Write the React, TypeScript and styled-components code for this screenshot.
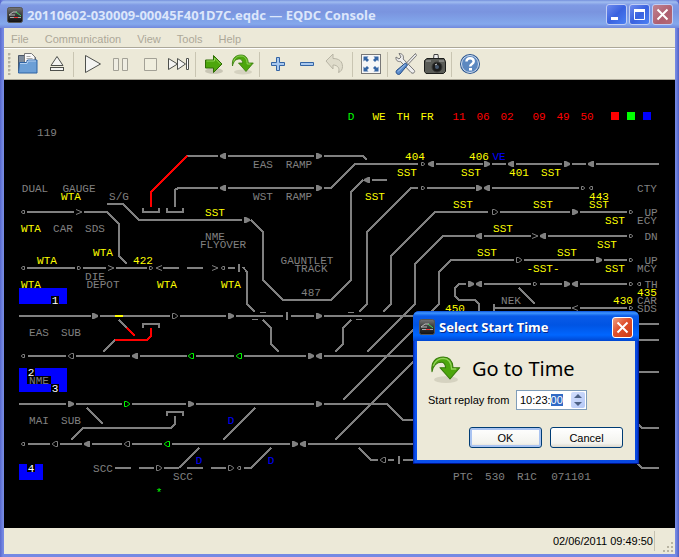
import React, { useEffect, useRef } from 'react';
import styled, { createGlobalStyle } from 'styled-components';

const GlobalStyle = createGlobalStyle`
  * { box-sizing: border-box; }
  body { margin: 0; background: #5668cf; font: 11px/14px "Liberation Sans", sans-serif; color: #000; }
  button, input { font: inherit; }
`;

const Shell = styled.div`
  display: flex;
  flex-direction: column;
  min-height: 100vh;
  padding: 0 4px 3px;
  background: linear-gradient(90deg, #5868cd 0, #7589e3 3px, #7589e3 calc(100% - 3px), #5060c4 100%);
`;

const TitleBar = styled.header`
  display: flex;
  align-items: center;
  gap: 4px;
  height: 28px;
  margin: 0 -4px;
  padding: 1px 6px 0 7px;
  border-radius: 6px 6px 0 0;
  background: linear-gradient(#7590dc 0, #a0bcf0 2px, #7f9ae4 5px, #7a94df 12px, #80a2e8 20px, #84a8ec 24px, #7188dc 28px);
`;

const WindowTitle = styled.h1`
  flex: 1;
  margin: 0;
  color: #dce6fb;
  font: bold 13px/18px "Noto Sans", sans-serif;
  white-space: nowrap;
`;

const CaptionButtons = styled.div`
  display: flex;
  gap: 2px;
`;

const CaptionButton = styled.button<{ $tone: 'blue' | 'faded' | 'red' }>`
  display: grid;
  place-items: center;
  width: 21px;
  height: 21px;
  padding: 0;
  border: 1px solid ${p => (p.$tone === 'red' ? '#fff' : '#c0cdf5')};
  border-radius: 3px;
  background: ${p =>
    p.$tone === 'blue'
      ? 'linear-gradient(135deg, #6f8cee, #3a62df 50%, #4a80f4)'
      : p.$tone === 'faded'
        ? 'linear-gradient(135deg, #c08391, #ae5f70 60%, #b56a76)'
        : 'linear-gradient(135deg, #f0a080, #df4f2c 45%, #cc3a12)'};
`;

const MenuBar = styled.nav`
  display: flex;
  gap: 16px;
  height: 20px;
  padding: 3px 7px 0;
  background: #ece9d8;
  border-bottom: 1px solid #aca899;
`;

const MenuItem = styled.button`
  padding: 0;
  border: 0;
  background: none;
  color: #aca899;
  line-height: 14px;
`;

const ToolBar = styled.div`
  display: flex;
  align-items: center;
  height: 32px;
  padding-left: 4px;
  background: #ece9d8;
  border-top: 1px solid #fff;
  border-bottom: 1px solid #aca899;
`;

const Handle = styled.div`
  width: 5px;
  height: 22px;
  background: radial-gradient(circle at 1px 1px, #b5b19f 1px, transparent 2px) 0 0 / 5px 4px;
`;

const ToolButton = styled.button`
  display: grid;
  place-items: center;
  width: 29px;
  height: 28px;
  padding: 0;
  border: 0;
  background: none;
`;

const Divider = styled.div`
  width: 6px;
  height: 25px;
  border-left: 2px solid transparent;
  background: linear-gradient(90deg, #c9c5b2 1px, transparent 1px) no-repeat;
`;

const Console = styled.main`
  position: relative;
  flex: 1;
  background: #000;
`;

const Board = styled.svg`
  display: block;
  width: 100%;
  height: auto;
  font-family: "Liberation Mono", monospace;
  font-size: 11px;
`;

const StatusBar = styled.footer`
  display: flex;
  align-items: center;
  justify-content: flex-end;
  gap: 8px;
  height: 26px;
  padding-right: 1px;
  background: #ece9d8;
`;

const Clock = styled.output`
  height: 20px;
  padding-right: 1px;
  border-right: 1px solid #c5c2b2;
  line-height: 20px;
`;

const Grip = styled.svg`
  align-self: flex-end;
`;

const Dialog = styled.section`
  position: absolute;
  left: 409px;
  top: 231px;
  width: 226px;
  padding: 0 4px 3px;
  border-radius: 6px 6px 0 0;
  background: linear-gradient(90deg, #001ea0 0, #0a50ee 2px, #0848e0 calc(100% - 2px), #00138c 100%);
  border-bottom: 1px solid #00138c;
`;

const DialogTitle = styled.header`
  display: flex;
  align-items: center;
  gap: 4px;
  height: 30px;
  margin: 0 -4px;
  padding: 2px 6px 0 6px;
  border-radius: 6px 6px 0 0;
  background: linear-gradient(#0a4fd8 0, #3d95ff 2px, #0a5be8 5px, #0054e3 14px, #0066ff 24px, #0046d0 30px);
`;

const DialogName = styled.h2`
  flex: 1;
  margin: 0;
  color: #fff;
  font: bold 13px/18px "Noto Sans", sans-serif;
  text-shadow: 1px 1px #0a2a88;
  white-space: nowrap;
`;

const DialogBody = styled.form`
  padding: 12px 12px 12px 11px;
  background: #ece9d8;
`;

const Heading = styled.div`
  display: flex;
  align-items: center;
  gap: 10px;
  height: 32px;
  padding-left: 2px;
`;

const HeadingText = styled.h3`
  margin: 0;
  font: 20px/28px "Noto Sans", sans-serif;
`;

const Field = styled.div`
  display: grid;
  grid-template-columns: 82px 71px;
  align-items: center;
  gap: 6px;
  margin-top: 5px;
`;

const SpinBox = styled.div`
  display: flex;
  align-items: center;
  height: 20px;
  padding-right: 1px;
  border: 1px solid #7f9db9;
  background: #fff;
`;

const TimeInput = styled.input`
  flex: 1;
  min-width: 0;
  height: 16px;
  padding: 0 0 0 3px;
  border: 0;
  outline: 0;
  background: none;
  &::selection { background: #316ac5; color: #fff; }
`;

const Steppers = styled.div`
  display: flex;
  flex-direction: column;
  width: 14px;
  border-radius: 2px;
  overflow: hidden;
  background: linear-gradient(135deg, #d2defc, #b4c8f6);
`;

const Stepper = styled.button`
  display: grid;
  place-items: center;
  height: 8px;
  padding: 0;
  border: 0;
  background: none;
`;

const Actions = styled.div`
  display: flex;
  justify-content: flex-end;
  gap: 8px;
  margin-top: 17px;
`;

const PushButton = styled.button<{ $primary?: boolean }>`
  width: 73px;
  height: 21px;
  padding: 0;
  border: 1px solid #003c74;
  border-radius: 3px;
  background: linear-gradient(#fff, #f3f3ee 80%, #dcd8cc);
  box-shadow: ${p => (p.$primary ? 'inset 0 0 0 2px #a9c3f1' : 'none')};
  line-height: 18px;
`;

/* ---------- icons ---------- */

const AppIcon = () => (
  <svg width="16" height="16" viewBox="0 0 16 16">
    <defs>
      <linearGradient id="app" x2="0" y2="1"><stop stopColor="#777" /><stop offset=".55" stopColor="#333" /><stop offset="1" stopColor="#111" /></linearGradient>
    </defs>
    <rect x=".5" y=".5" width="15" height="15" rx="2" fill="url(#app)" stroke="#555" />
    <path d="M2 8l4-3h4M2 8h6" fill="none" stroke="#bbb" />
    <path d="M9 5l5 4" stroke="#4d6" />
    <path d="M3 10.500h4M11 10.500h3" stroke="#aaa" />
    <path d="M7 10.500h4" stroke="#e33" />
  </svg>
);

const CloseGlyph = () => (
  <svg width="13" height="13" viewBox="0 0 13 13"><path d="M1.500 1.500l10 10M11.500 1.500l-10 10" stroke="#fff" strokeWidth="2" /></svg>
);
const MinGlyph = () => (
  <svg width="13" height="13" viewBox="0 0 13 13"><path d="M1 10.500h7" stroke="#fff" strokeWidth="3" /></svg>
);
const MaxGlyph = () => (
  <svg width="13" height="13" viewBox="0 0 13 13"><path d="M1.500 2v9.500h10V2" fill="none" stroke="#fff" /><path d="M1 2.500h11" stroke="#fff" strokeWidth="3" /></svg>
);

const Glyph = ({ children }: { children: React.ReactNode }) => (
  <svg width="24" height="24" viewBox="0 0 24 24">{children}</svg>
);

const FolderIcon = () => (
  <Glyph>
    <path d="M2.500 19V3.500h6l1 2h10V19z" fill="#7d8b9c" stroke="#4a5668" />
    <path d="M8.500 12V1.500h7l3.500 3.500v8z" fill="#fafafa" stroke="#777" />
    <path d="M10.500 4.500h4M10.500 6.500h6M10.500 8.500h6" stroke="#aaa" />
    <path d="M3.500 10.500h7l1-2.500h9.500v13H2.500z" fill="#6c9fd6" stroke="#2d62a3" />
    <path d="M4 11.500h7l1-2.500h8" stroke="#b3d0f0" fill="none" />
  </Glyph>
);
const EjectIcon = () => (
  <Glyph>
    <path d="M12 4.500l6 9H6z" fill="#f4f4f2" stroke="#4e504c" strokeLinejoin="round" />
    <rect x="5.500" y="15.500" width="13" height="3" fill="#f4f4f2" stroke="#4e504c" />
  </Glyph>
);
const PlayIcon = () => <Glyph><path d="M5.500 3.500l15 8.500-15 8.500z" fill="#f4f4f2" stroke="#4e504c" strokeLinejoin="round" /></Glyph>;
const PauseIcon = () => <Glyph><path d="M4.500 6.500h5v12h-5zM13.500 6.500h5v12h-5z" fill="#efede2" stroke="#a3a196" /></Glyph>;
const StopIcon = () => <Glyph><path d="M6.500 6.500h12v12h-12z" fill="#f0eede" stroke="#a3a196" /></Glyph>;
const SkipIcon = () => (
  <Glyph>
    <path d="M1.500 6.500l9 5.500-9 5.500zM10.500 6.500l8 5.500-8 5.500z" fill="#f4f4f2" stroke="#4e504c" strokeLinejoin="round" />
    <path d="M19.500 6.500h2v11h-2z" fill="#fff" stroke="#4e504c" />
  </Glyph>
);
const GoIcon = () => (
  <Glyph>
    <ellipse cx="12" cy="19" rx="9" ry="3" fill="#c9c6b5" />
    <path d="M3.500 8h8V3.500l8.500 8.500-8.500 8.500V16h-8z" fill="#4da60c" stroke="#2f6b05" strokeLinejoin="round" />
    <path d="M4.500 9h8V6l6 6" fill="none" stroke="#90d455" />
  </Glyph>
);
const JumpShape = () => (
  <>
    <ellipse cx="12" cy="20" rx="9" ry="2.500" fill="#d5d2c0" />
    <path d="M1.500 14C.5 6.500 4.500 3 10 3c4.500 0 7 3 7.300 8h5L15 19.500 7.500 11h4.200C11.500 8.500 10.300 7 8.500 7 4.500 7 2.500 9.500 1.500 14z" fill="#4da60c" stroke="#377a0b" strokeWidth=".8" strokeLinejoin="round" />
    <path d="M2.500 9.500C4 5.500 6.500 4 10 4c4 .2 6 3 6.200 8h3.500" fill="none" stroke="#93d45a" />
  </>
);
const JumpIcon = () => <Glyph><JumpShape /></Glyph>;
const PlusIcon = () => <Glyph><path d="M10.500 5.500h3v5h5v3h-5v5h-3v-5h-5v-3h5z" fill="#a8c8ee" stroke="#3465a4" strokeLinejoin="round" /></Glyph>;
const MinusIcon = () => <Glyph><path d="M5.500 10.500h13v3h-13z" fill="#a8c8ee" stroke="#3465a4" strokeLinejoin="round" /></Glyph>;
const UndoIcon = () => <Glyph><path d="M2 9l7-7v4.500c6 0 9.500 3 9.500 8 0 3-1.500 5-4 6 1.500-4-.5-7.500-5.500-7.500v4z" fill="#dfdccb" stroke="#b8b5a5" strokeLinejoin="round" /></Glyph>;
const FullIcon = () => (
  <Glyph>
    <rect x="2.500" y="2.500" width="19" height="19" fill="#f7f7f7" stroke="#777" />
    <path d="M4.500 4.500h5L8 6l2 2-2 2-2-2-1.500 1.500zM19.500 4.500v5L18 8l-2 2-2-2 2-2-1.500-1.500zM4.500 19.500v-5L6 16l2-2 2 2-2 2 1.500 1.500zM19.500 19.500h-5L16 18l-2-2 2-2 2 2 1.500-1.500z" fill="#3465a4" />
  </Glyph>
);
const ToolsIcon = () => (
  <Glyph>
    <path d="M5 1.500c4 0 5 3 4.200 5.500L20 18c2 2-1 4.500-3 2.500L6.500 9.500C4 10 1.500 8.500 2 5l3 2 2-2z" fill="#eee" stroke="#777" strokeLinejoin="round" />
    <path d="M21.500 1.500l1 2L14 12.500 12.500 11z" fill="#eee" stroke="#777" />
    <path d="M11.500 11l2 2-7.500 9c-2 1.500-5-1-3.500-3.500z" fill="#5a8ccc" stroke="#204a87" strokeLinejoin="round" />
    <path d="M4 19.500l7-7" stroke="#b5cfef" />
  </Glyph>
);
const CameraIcon = () => (
  <Glyph>
    <path d="M10.500 7l.5-4.500h4L15.500 7" fill="#eee" stroke="#444" />
    <path d="M1.500 8.500L4 6.500h17l1.500 3v10l-2 2H3l-1.500-2z" fill="#5a5c57" stroke="#1c1d1b" />
    <path d="M3 9h5M16 9h5" stroke="#aaa" />
    <circle cx="14" cy="15" r="5" fill="#1b1c1b" stroke="#3a3b39" />
    <circle cx="14" cy="15" r="2" fill="#46586e" />
    <path d="M12 13l2-1" stroke="#ddd" />
  </Glyph>
);
const HelpIcon = () => (
  <Glyph>
    <circle cx="12" cy="12" r="10" fill="#2b5590" />
    <circle cx="12" cy="12" r="8.500" fill="#5c88c0" stroke="#d5e2f2" />
    <path d="M8.500 9.500c0-4.500 7.200-4.300 7.200 0 0 2.500-3.500 2.500-3.500 5" fill="none" stroke="#fff" strokeWidth="2.500" />
    <rect x="11" y="16" width="3" height="2.500" fill="#fff" />
  </Glyph>
);

const tools: ([string, React.FC] | null)[] = [
  ['Open', FolderIcon], ['Eject', EjectIcon], null,
  ['Play', PlayIcon], ['Pause', PauseIcon], ['Stop', StopIcon], ['Skip to end', SkipIcon], null,
  ['Go', GoIcon], ['Go to time', JumpIcon], null,
  ['Zoom in', PlusIcon], ['Zoom out', MinusIcon], ['Undo', UndoIcon], null,
  ['Full screen', FullIcon], null,
  ['Preferences', ToolsIcon], ['Snapshot', CameraIcon], null,
  ['Help contents', HelpIcon],
];

/* ---------- track diagram ---------- */

const GREY = '#808080';
const YELLOW = '#ffff00';
const RED = '#ff0000';
const GREEN = '#00ff00';
const BLUE = '#0000ff';

const straight: [number, [number, number][]][] = [
  [156, [[187, 218], [228, 314]]],
  [164, [[436, 483], [492, 506], [516, 562], [572, 586], [596, 659]]],
  [180, [[372, 387]]],
  [188, [[228, 314], [427, 475], [492, 579]]],
  [212, [[27, 74], [500, 570], [580, 627]]],
  [236, [[484, 531], [548, 627]]],
  [260, [[524, 594], [604, 627]]],
  [268, [[27, 75], [83, 106], [116, 147], [163, 179], [187, 203], [228, 235]]],
  [284, [[484, 531], [540, 562], [580, 627]]],
  [308, [[494, 571], [580, 627]]],
  [316, [[19, 91], [100, 170], [180, 226], [236, 283], [291, 314], [324, 440]]],
  [324, [[630, 659]]],
  [340, [[630, 659]]],
  [356, [[28, 66], [76, 130], [140, 187], [196, 234], [244, 306], [324, 440]]],
  [372, [[630, 659]]],
  [404, [[19, 66], [76, 122], [132, 186], [196, 314]]],
  [444, [[28, 50], [60, 82], [92, 122], [132, 162], [172, 290], [308, 440]]],
  [460, [[388, 394], [403, 440]]],
  [468, [[115, 131], [139, 154], [164, 179], [187, 203], [211, 226]]],
];

const bends = [
  'M175 207V190L178 188H218', 'M143 208V212H159V208', 'M167 208V212H183V208',
  'M107 204H123L139 220H242', 'M84 212H107L119 224V256L127 264', 'M243 267L247 272V304L255 312',
  'M324 156H363L367 160', 'M324 188H331L355 164H418',
  'M363 180L351 192V280L331 300H283L263 280V232L251 220',
  'M359 312L367 304V232L411 188H418', 'M383 312L391 304V256L435 212H488',
  'M367 352L415 304V264L443 236H475', 'M343 400L439 304V272L451 260H514',
  'M335 440L440 335', 'M466 284H459L455 288V296L459 300H475L479 304V318',
  'M519 288L535 304', 'M494 304V312', 'M239 264V272', 'M287 312V320', 'M399 456V464',
  'M119 320L127 328', 'M143 328V324H159V328', 'M115 340L103 352',
  'M263 320L271 328V344L279 352', 'M351 320L343 328V344L335 352',
  'M324 404H387L403 420H420', 'M87 408L103 424', 'M167 416V412H183V416',
  'M175 416V424L171 428H83L71 440', 'M179 468L199 448', 'M244 468H251L271 448',
  'M223 440L255 408', 'M359 448L371 460H378', 'M630 416L642 428H659', 'M630 456L642 468H659',
];

const redTracks = ['M187 156L151 192V207', 'M127 328L135 336', 'M115 340H147L151 336V328'];

type Kind = 'solid' | 'open' | 'small' | 'chevron';
type Mark = [Kind, 'l' | 'r', number, number, string?];

const marks: Mark[] = [
  ['solid', 'l', 223, 156], ['solid', 'r', 319, 156],
  ['small', 'r', 423, 164], ['solid', 'l', 431, 164], ['solid', 'r', 487, 164], ['solid', 'l', 511, 164], ['solid', 'r', 567, 164], ['solid', 'l', 591, 164],
  ['solid', 'l', 367, 180],
  ['solid', 'l', 223, 188], ['solid', 'r', 319, 188], ['small', 'r', 423, 188], ['solid', 'r', 479, 188], ['solid', 'l', 487, 188], ['small', 'r', 583, 188], ['small', 'l', 591, 188],
  ['small', 'l', 23, 212], ['chevron', 'r', 79, 212], ['open', 'r', 495, 212], ['solid', 'r', 575, 212], ['small', 'r', 631, 212],
  ['solid', 'r', 247, 220],
  ['solid', 'l', 479, 236], ['chevron', 'r', 535, 236], ['solid', 'l', 543, 236], ['small', 'r', 631, 236],
  ['open', 'r', 519, 260], ['solid', 'r', 599, 260], ['small', 'r', 631, 260],
  ['small', 'l', 23, 268], ['small', 'r', 79, 268], ['chevron', 'r', 111, 268], ['small', 'r', 151, 268], ['chevron', 'l', 159, 268], ['chevron', 'r', 215, 268], ['small', 'l', 223, 268],
  ['solid', 'r', 471, 284], ['solid', 'l', 479, 284], ['small', 'r', 535, 284], ['solid', 'r', 567, 284], ['solid', 'l', 575, 284], ['small', 'r', 631, 284], ['small', 'l', 639, 284],
  ['chevron', 'l', 575, 308], ['small', 'r', 631, 308],
  ['solid', 'r', 95, 316], ['open', 'r', 175, 316], ['solid', 'r', 231, 316], ['solid', 'r', 319, 316],
  ['small', 'l', 23, 356], ['open', 'l', 71, 356], ['solid', 'l', 135, 356], ['open', 'l', 191, 356, GREEN], ['open', 'l', 239, 356, GREEN], ['solid', 'r', 311, 356], ['solid', 'l', 319, 356],
  ['solid', 'r', 71, 404], ['open', 'r', 127, 404, GREEN], ['solid', 'r', 191, 404], ['solid', 'r', 319, 404],
  ['small', 'l', 23, 444], ['open', 'l', 55, 444], ['solid', 'l', 87, 444], ['open', 'l', 127, 444], ['open', 'l', 167, 444, GREEN], ['solid', 'r', 295, 444], ['solid', 'l', 303, 444],
  ['open', 'l', 383, 460],
  ['open', 'r', 159, 468], ['open', 'r', 231, 468], ['small', 'l', 239, 468],
];

const shapes: Record<Kind, string> = {
  solid: 'M-3-3H-1L3-1V1L-1 3H-3Z',
  open: 'M-2.500-2.500H-.5L2.500-.5V.5L-.5 2.500H-2.500Z',
  small: 'M-1.500-1.500H0L1.500-.5V.5L0 1.500H-1.500Z',
  chevron: 'M-3-2.500L3 0L-3 2.500',
};

const labels: [string, number, number, string?][] = [
  ['D', 348, 120, GREEN], ['WE TH FR', 372, 120, YELLOW],
  ['11 06 02', 452, 120, RED], ['09 49 50', 532, 120, RED],
  ['119', 36, 136], ['404', 404, 160, YELLOW], ['406', 468, 160, YELLOW], ['VE', 492, 160, BLUE],
  ['EAS RAMP', 252, 168], ['SST', 396, 176, YELLOW], ['SST', 460, 176, YELLOW], ['401 SST', 508, 176, YELLOW],
  ['DUAL GAUGE', 20, 192], ['CTY', 636, 192], ['WTA', 60, 200, YELLOW], ['S/G', 108, 200], ['WST RAMP', 252, 200], ['SST', 364, 200, YELLOW], ['443', 588, 200, YELLOW],
  ['SST', 452, 208, YELLOW], ['SST', 532, 208, YELLOW], ['SST', 588, 208, YELLOW],
  ['SST', 204, 216, YELLOW], ['UP', 644, 216], ['ECY', 636, 224], ['SST', 604, 224, YELLOW],
  ['WTA', 20, 232, YELLOW], ['CAR SDS', 52, 232], ['SST', 492, 232, YELLOW], ['NME', 204, 240], ['DN', 644, 240],
  ['FLYOVER', 196, 248], ['SST', 596, 248, YELLOW], ['WTA', 92, 256, YELLOW], ['SST', 476, 256, YELLOW], ['SST', 556, 256, YELLOW],
  ['WTA', 36, 264, YELLOW], ['422', 132, 264, YELLOW], ['GAUNTLET', 276, 264], ['UP', 644, 264],
  ['TRACK', 292, 272], ['-SST-', 524, 272, YELLOW], ['SST', 604, 272, YELLOW], ['MCY', 636, 272],
  ['DIE', 84, 280], ['DEPOT', 84, 288], ['WTA', 20, 288, YELLOW], ['WTA', 156, 288, YELLOW], ['WTA', 220, 288, YELLOW], ['TH', 644, 288],
  ['487', 300, 296], ['435', 636, 296, YELLOW], ['NEK', 500, 304], ['430', 612, 304, YELLOW], ['CAR', 636, 304],
  ['450', 444, 312, YELLOW], ['SDS', 636, 312], ['1', 52, 304, '#fff'],
  ['EAS SUB', 28, 336], ['2', 28, 376, '#fff'], ['NME', 28, 384], ['3', 52, 392, '#fff'], ['MAI SUB', 28, 424], ['D', 228, 424, BLUE],
  ['4', 28, 472, '#fff'], ['SCC', 92, 472], ['D', 196, 464, BLUE], ['D', 268, 464, BLUE], ['SCC', 172, 480], ['*', 156, 496, GREEN],
  ['PTC 530 R1C 071101', 452, 480],
];

/* Every word is centred on its columns of the terminal's 8-unit character grid. */
const CELL = 8;
const words = labels.flatMap(([text, x, y, color = GREY]) =>
  [...text.matchAll(/\S+/g)].map(m => ({
    word: m[0],
    x: x - 1 + (m.index + m[0].length / 2) * CELL,
    y,
    color,
  })),
);

const blocks: [number, number, number, number, string][] = [
  [611, 112, 8, 8, RED], [627, 112, 8, 8, GREEN], [643, 112, 8, 8, BLUE],
  [19, 288, 48, 16, BLUE], [51, 296, 8, 8, '#000'],
  [19, 368, 48, 24, BLUE], [27, 368, 8, 8, '#000'], [27, 376, 24, 8, '#000'], [51, 384, 8, 8, '#000'],
  [19, 464, 24, 16, BLUE], [27, 464, 8, 8, '#000'],
];

const TrackBoard = () => (
  <Board viewBox="4 80 671 448" role="img" aria-label="Track diagram">
    <g fill="none" stroke={GREY} strokeWidth="2" shapeRendering="crispEdges">
      {straight.map(([y, runs]) => (
        <path key={y} d={runs.map(([a, b]) => `M${a} ${y}H${b}`).join('')} />
      ))}
      <path d={bends.join('')} />
      <path d={redTracks.join('')} stroke={RED} />
      <path d="M115 316H123" stroke={YELLOW} />
      <path d="M260 312.500h6M252 319.500h6M348 312.500h6M356 319.500h6" strokeWidth="1" />
    </g>
    {blocks.map(([x, y, w, h, fill], i) => (
      <rect key={i} x={x} y={y} width={w} height={h} fill={fill} />
    ))}
    {marks.map(([kind, dir, x, y, color = GREY], i) => (
      <path
        key={i}
        d={shapes[kind]}
        transform={`translate(${x} ${y})${dir === 'l' ? ' scale(-1 1)' : ''}`}
        fill={kind === 'solid' ? color : 'none'}
        stroke={kind === 'solid' ? 'none' : color}
      />
    ))}
    {words.map(({ word, x, y, color }, i) => (
      <text key={i} x={x} y={y} fill={color} textAnchor="middle">{word}</text>
    ))}
  </Board>
);

const GoToTimeDialog = () => {
  const time = useRef<HTMLInputElement>(null);
  useEffect(() => {
    time.current?.focus();
    time.current?.setSelectionRange(6, 8);
  }, []);
  return (
    <Dialog role="dialog" aria-labelledby="dialog-name">
      <DialogTitle>
        <AppIcon />
        <DialogName id="dialog-name">Select Start Time</DialogName>
        <CaptionButton $tone="red" aria-label="Close dialog"><CloseGlyph /></CaptionButton>
      </DialogTitle>
      <DialogBody onSubmit={e => e.preventDefault()}>
        <Heading>
          <svg width="32" height="32" viewBox="0 0 24 24"><JumpShape /></svg>
          <HeadingText>Go to Time</HeadingText>
        </Heading>
        <Field>
          <label htmlFor="start">Start replay from</label>
          <SpinBox>
            <TimeInput id="start" ref={time} defaultValue="10:23:00" />
            <Steppers>
              <Stepper type="button" aria-label="Later"><svg width="8" height="4" viewBox="0 0 8 4"><path d="M0 4l4-4 4 4z" fill="#4d6185" /></svg></Stepper>
              <Stepper type="button" aria-label="Earlier"><svg width="8" height="4" viewBox="0 0 8 4"><path d="M0 0l4 4 4-4z" fill="#4d6185" /></svg></Stepper>
            </Steppers>
          </SpinBox>
        </Field>
        <Actions>
          <PushButton $primary type="submit">OK</PushButton>
          <PushButton type="button">Cancel</PushButton>
        </Actions>
      </DialogBody>
    </Dialog>
  );
};

export default function App() {
  return (
    <>
      <GlobalStyle />
      <Shell>
        <TitleBar>
          <AppIcon />
          <WindowTitle>20110602-030009-00045F401D7C.eqdc — EQDC Console</WindowTitle>
          <CaptionButtons>
            <CaptionButton $tone="blue" aria-label="Minimize"><MinGlyph /></CaptionButton>
            <CaptionButton $tone="blue" aria-label="Maximize"><MaxGlyph /></CaptionButton>
            <CaptionButton $tone="faded" aria-label="Close"><CloseGlyph /></CaptionButton>
          </CaptionButtons>
        </TitleBar>
        <MenuBar>
          {['File', 'Communication', 'View', 'Tools', 'Help'].map(name => <MenuItem key={name}>{name}</MenuItem>)}
        </MenuBar>
        <ToolBar role="toolbar">
          <Handle />
          {tools.map((tool, i) => {
            if (!tool) return <Divider key={i} />;
            const [name, Icon] = tool;
            return <ToolButton key={name} aria-label={name}><Icon /></ToolButton>;
          })}
        </ToolBar>
        <Console>
          <TrackBoard />
          <GoToTimeDialog />
        </Console>
        <StatusBar>
          <Clock>02/06/2011 09:49:50</Clock>
          <Grip width="11" height="13" viewBox="0 0 11 13">
            <path d="M8 1h2v2H8zM4 5h2v2H4zM8 5h2v2H8zM0 9h2v2H0zM4 9h2v2H4zM8 9h2v2H8z" fill="#b8b4a2" />
          </Grip>
        </StatusBar>
      </Shell>
    </>
  );
}
